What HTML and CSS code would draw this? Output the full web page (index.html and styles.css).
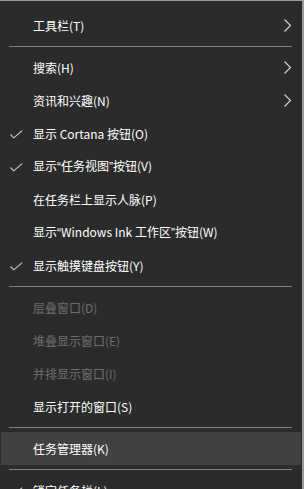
FILE: index.html
```html
<!DOCTYPE html>
<html lang="zh-CN">
<head>
<meta charset="utf-8">
<link rel="stylesheet" href="styles.css">
</head>
<body>
<div class="menu">
  <div class="item"><span class="check"></span><span class="label">工具栏(T)</span><svg class="arrow" width="8" height="14" viewBox="0 0 8 14"><path d="M0.5 0.5 L6.5 6.5 L0.5 12.5" fill="none" stroke="#d8d8d8" stroke-width="1.1"/></svg></div>
  <div class="sep"></div>
  <div class="item"><span class="check"></span><span class="label">搜索(H)</span><svg class="arrow" width="8" height="14" viewBox="0 0 8 14"><path d="M0.5 0.5 L6.5 6.5 L0.5 12.5" fill="none" stroke="#d8d8d8" stroke-width="1.1"/></svg></div>
  <div class="item"><span class="check"></span><span class="label">资讯和兴趣(N)</span><svg class="arrow" width="8" height="14" viewBox="0 0 8 14"><path d="M0.5 0.5 L6.5 6.5 L0.5 12.5" fill="none" stroke="#d8d8d8" stroke-width="1.1"/></svg></div>
  <div class="item"><span class="check"><svg width="13" height="9" viewBox="0 0 13 9"><path d="M0.5 4.5 L3.8 7.8 L12.2 0.6" fill="none" stroke="#d0d0d0" stroke-width="1.1"/></svg></span><span class="label">显示 Cortana 按钮(O)</span></div>
  <div class="item"><span class="check"><svg width="13" height="9" viewBox="0 0 13 9"><path d="M0.5 4.5 L3.8 7.8 L12.2 0.6" fill="none" stroke="#d0d0d0" stroke-width="1.1"/></svg></span><span class="label">显示<span class="q">“</span>任务视图<span class="q">”</span>按钮(V)</span></div>
  <div class="item"><span class="check"></span><span class="label">在任务栏上显示人脉(P)</span></div>
  <div class="item"><span class="check"></span><span class="label">显示<span class="q">“</span>Windows Ink 工作区<span class="q">”</span>按钮(W)</span></div>
  <div class="item"><span class="check"><svg width="13" height="9" viewBox="0 0 13 9"><path d="M0.5 4.5 L3.8 7.8 L12.2 0.6" fill="none" stroke="#d0d0d0" stroke-width="1.1"/></svg></span><span class="label">显示触摸键盘按钮(Y)</span></div>
  <div class="sep"></div>
  <div class="item disabled"><span class="check"></span><span class="label">层叠窗口(D)</span></div>
  <div class="item disabled"><span class="check"></span><span class="label">堆叠显示窗口(E)</span></div>
  <div class="item disabled"><span class="check"></span><span class="label">并排显示窗口(I)</span></div>
  <div class="item"><span class="check"></span><span class="label">显示打开的窗口(S)</span></div>
  <div class="sep"></div>
  <div class="item hover"><span class="check"></span><span class="label">任务管理器(K)</span></div>
  <div class="sep"></div>
  <div class="item"><span class="check"><svg width="13" height="9" viewBox="0 0 13 9"><path d="M0.5 4.5 L3.8 7.8 L12.2 0.6" fill="none" stroke="#d0d0d0" stroke-width="1.1"/></svg></span><span class="label">锁定任务栏(L)</span></div>
</div>
</body>
</html>
```

FILE: styles.css
```css
html, body {
  margin: 0;
  padding: 0;
  background: #2b2b2b;
  overflow: hidden;
}
.menu {
  width: 302px;
  height: 488px;
  background: #2b2b2b;
  border-top: 1px solid #9b9b9b;
  border-right: 2px solid #9b9b9b;
  padding-top: 8px;
  overflow: hidden;
  font-family: "Noto Sans CJK SC", "Noto Sans", sans-serif;
  font-size: 12px;
  color: #ffffff;
}
.item {
  display: flex;
  align-items: center;
  height: 33px;
  margin: 0 1px;
  padding: 0 9px 0 9px;
  box-sizing: border-box;
}
.check {
  width: 23px;
  flex: none;
  display: flex;
  align-items: center;
}
.check svg {
  display: block;
  margin-top: 1px;
}
.label {
  flex: 1;
  white-space: nowrap;
  line-height: 33px;
}
.q {
  font-family: "Liberation Sans", sans-serif;
}
.arrow {
  flex: none;
  display: block;
}
.disabled {
  color: #6d6d6d;
}
.hover {
  background: #414141;
}
.sep {
  height: 1px;
  margin: 4px 10px 4px 9px;
  background: #808080;
}
```
